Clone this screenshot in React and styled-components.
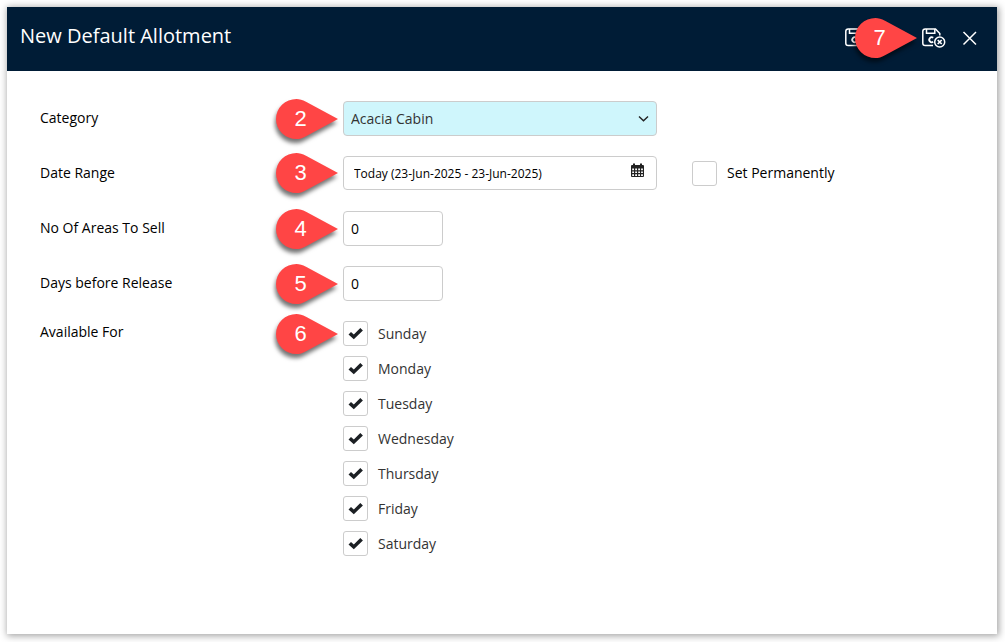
import React from 'react';
import styled, { createGlobalStyle } from 'styled-components';

const GlobalStyle = createGlobalStyle`
  * { box-sizing: border-box; }
  body {
    margin: 0;
    background: #fff;
    color: #000;
    font: 14px/20px "Open Sans", sans-serif;
  }
  input, select, button { font: inherit; }
`;

const Page = styled.div`
  display: flex;
  min-height: 100vh;
  padding: 7px 8px 8px 7px;
`;

const Dialog = styled.form`
  flex: 1;
  background: #fff;
  box-shadow: 1px 1px 7px 1px rgba(0, 0, 0, 0.36);
`;

const Header = styled.header`
  display: flex;
  align-items: center;
  height: 64px;
  padding: 0 15px 2px 13px;
  background: #001c36;
  color: #fff;
`;

const Title = styled.h1`
  flex: 1;
  margin: 0;
  padding-bottom: 4px;
  font-size: 20px;
  line-height: 28px;
  font-weight: 400;
`;

const Actions = styled.div`
  display: flex;
  align-items: center;
`;

const ActionSlot = styled.div`
  position: relative;
  display: flex;
  margin-left: ${(p) => p.$gap}px;
`;

const IconButton = styled.button`
  display: flex;
  padding: 0;
  border: 0;
  background: none;
  color: inherit;
  cursor: pointer;
`;

const Body = styled.div`
  display: grid;
  gap: 20px;
  padding: 30px 33px 76px;
`;

const Row = styled.div`
  display: grid;
  grid-template-columns: 303px 1fr;
  align-items: start;
  min-height: 35px;
`;

const Label = styled.label`
  padding-top: 7px;
`;

const GroupLabel = styled.span`
  line-height: 22px;
`;

const Controls = styled.div`
  display: flex;
  align-items: center;
  gap: 35px;
`;

const Field = styled.div`
  position: relative;
  display: flex;
  width: ${(p) => p.$width}px;
`;

const inputFrame = `
  width: 100%;
  height: 35px;
  margin: 0;
  border: 1px solid #ccc;
  border-radius: 4px;
  outline: 0;
`;

const Select = styled.select`
  ${inputFrame}
  appearance: none;
  padding: 0 30px 0 7px;
  background: #cff6fc;
  color: #333;
`;

const TextInput = styled.input`
  ${inputFrame}
  padding: 0 7px;
  background: #fff;
  color: #000;
`;

const DateInput = styled(TextInput)`
  height: 34px;
  padding: 0 34px 0 10px;
  font-size: 12px;
`;

const Adornment = styled.span`
  position: absolute;
  top: 0;
  right: ${(p) => p.$right}px;
  display: flex;
  align-items: center;
  height: 100%;
  pointer-events: none;
`;

const CalendarButton = styled(IconButton)`
  position: absolute;
  top: 7px;
  right: 13px;
  color: #222;
`;

const Days = styled.div`
  display: grid;
  gap: 10px;
`;

const CheckLabel = styled.label`
  display: flex;
  align-items: center;
  gap: 10px;
  color: ${(p) => p.$color};
`;

const CheckBoxFrame = styled.span`
  position: relative;
  display: flex;
`;

const CheckBox = styled.input`
  appearance: none;
  width: 25px;
  height: 25px;
  margin: 0;
  border: 1px solid #ccc;
  border-radius: 3px;
  background: #fff;

  & + svg { display: none; }
  &:checked + svg { display: block; }
`;

const CheckMark = styled.svg`
  position: absolute;
  inset: 0;
  pointer-events: none;
`;

const Pin = styled.span`
  position: absolute;
  top: 50%;
  right: calc(100% + 5px);
  display: flex;
  align-items: center;
  width: 62px;
  height: 40px;
  margin-top: -20px;
  pointer-events: none;

  svg {
    position: absolute;
    inset: 0;
    overflow: visible;
    filter: drop-shadow(-1px 4px 2px rgba(0, 0, 0, 0.55));
  }
`;

const PinNumber = styled.span`
  position: relative;
  width: 49px;
  color: #fff;
  font: 22px/40px "Liberation Sans", sans-serif;
  text-align: center;
`;

function Callout({ children }) {
  return (
    <Pin>
      <svg width="62" height="40" viewBox="0 0 62 40" aria-hidden="true">
        <path
          d="M62 20 30 37.200C26.500 39.200 23.500 40 20.500 40A20.500 20 0 0 1 20.500 0C23.500 0 26.500.8 30 2.800Z"
          fill="#ff4545"
        />
      </svg>
      <PinNumber>{children}</PinNumber>
    </Pin>
  );
}

function SaveIcon({ withClose }) {
  return (
    <svg width="24" height="22" viewBox="0 0 24 22" fill="none" stroke="currentColor" strokeWidth="1.500" aria-hidden="true">
      <path d={withClose
        ? 'M11 18.500H3.200Q.8 18.500.8 16.200V4.200Q.8 1.900 3.200 1.900H13.500L17.800 6.500V8.500'
        : 'M3.200 1.900H13.500L17.800 6.500V16.200Q17.800 18.500 15.400 18.500H3.200Q.8 18.500.8 16.200V4.200Q.8 1.900 3.200 1.900Z'} />
      <path d="M4.500 2V6.200H12.800V2" />
      <path d="M11.200 10.700A2.500 2.500 0 1 0 11.200 14.800" strokeWidth="1.800" />
      {withClose && (
        <>
          <circle cx="17.700" cy="15" r="5" />
          <path d="m15.700 13 4 4m0-4-4 4" strokeWidth="1.700" />
        </>
      )}
    </svg>
  );
}

function Check({ label, color = '#333', ...rest }) {
  return (
    <CheckLabel $color={color}>
      <CheckBoxFrame>
        <CheckBox type="checkbox" {...rest} />
        <CheckMark width="25" height="25" viewBox="0 0 25 25" aria-hidden="true">
          <path d="M5.500 13.500 8 11l2.800 2.600L17.300 7l2.600 2.400L10.800 18.300Z" fill="#1c2024" />
        </CheckMark>
      </CheckBoxFrame>
      {label}
    </CheckLabel>
  );
}

const days = ['Sunday', 'Monday', 'Tuesday', 'Wednesday', 'Thursday', 'Friday', 'Saturday'];

export default function App() {
  return (
    <Page>
      <GlobalStyle />
      <Dialog>
        <Header>
          <Title>New Default Allotment</Title>
          <Actions>
            <ActionSlot $gap={0}>
              <IconButton type="button" aria-label="Save"><SaveIcon /></IconButton>
            </ActionSlot>
            <ActionSlot $gap={53}>
              <IconButton type="button" aria-label="Save and close"><SaveIcon withClose /></IconButton>
              <Callout>7</Callout>
            </ActionSlot>
            <ActionSlot $gap={12}>
              <IconButton type="button" aria-label="Close">
                <svg width="24" height="22" viewBox="0 0 24 22" fill="none" stroke="currentColor" strokeWidth="1.500" aria-hidden="true">
                  <path d="m5.500 5 12.500 12.500m0-12.500L5.500 17.500" />
                </svg>
              </IconButton>
            </ActionSlot>
          </Actions>
        </Header>
        <Body>
          <Row>
            <Label htmlFor="category">Category</Label>
            <Controls>
              <Field $width={314}>
                <Select id="category" defaultValue="Acacia Cabin">
                  <option>Acacia Cabin</option>
                </Select>
                <Adornment $right={8}>
                  <svg width="11" height="7" viewBox="0 0 11 7" fill="none" stroke="#222" strokeWidth="1.400" aria-hidden="true">
                    <path d="m1 1.400 4.500 4.400L10 1.400" />
                  </svg>
                </Adornment>
                <Callout>2</Callout>
              </Field>
            </Controls>
          </Row>
          <Row>
            <Label htmlFor="range">Date Range</Label>
            <Controls>
              <Field $width={314}>
                <DateInput id="range" type="text" defaultValue="Today (23-Jun-2025 - 23-Jun-2025)" />
                <CalendarButton type="button" aria-label="Open calendar">
                  <svg width="13" height="15" viewBox="0 0 13 15" aria-hidden="true">
                    <path d="M0 3Q0 2 1 2H2V.5H4V2H9V.5H11V2H12Q13 2 13 3V13Q13 14 12 14H1Q0 14 0 13Z" fill="currentColor" />
                    <path d="M1.200 5.500h1.800v1.700h-1.800zM4.200 5.500h1.800v1.700H4.200zM7.200 5.500h1.800v1.700H7.200zM10.100 5.500h1.800v1.700h-1.800zM1.200 8.400h1.800v1.700h-1.800zM4.200 8.400h1.800v1.700H4.200zM7.200 8.400h1.800v1.700H7.200zM10.100 8.400h1.800v1.700h-1.800zM1.200 11.200h1.800v1.700h-1.800zM4.200 11.200h1.800v1.700H4.200zM7.200 11.200h1.800v1.700H7.200zM10.100 11.200h1.800v1.700h-1.800z" fill="#fff" />
                  </svg>
                </CalendarButton>
                <Callout>3</Callout>
              </Field>
              <Check label="Set Permanently" color="#000" />
            </Controls>
          </Row>
          <Row>
            <Label htmlFor="areas">No Of Areas To Sell</Label>
            <Controls>
              <Field $width={100}>
                <TextInput id="areas" type="text" defaultValue="0" />
                <Callout>4</Callout>
              </Field>
            </Controls>
          </Row>
          <Row>
            <Label htmlFor="release">Days before Release</Label>
            <Controls>
              <Field $width={100}>
                <TextInput id="release" type="text" defaultValue="0" />
                <Callout>5</Callout>
              </Field>
            </Controls>
          </Row>
          <Row role="group" aria-labelledby="available">
            <GroupLabel id="available">Available For</GroupLabel>
            <Days>
              {days.map((day, i) => (
                <Field key={day}>
                  <Check label={day} defaultChecked />
                  {i === 0 && <Callout>6</Callout>}
                </Field>
              ))}
            </Days>
          </Row>
        </Body>
      </Dialog>
    </Page>
  );
}
